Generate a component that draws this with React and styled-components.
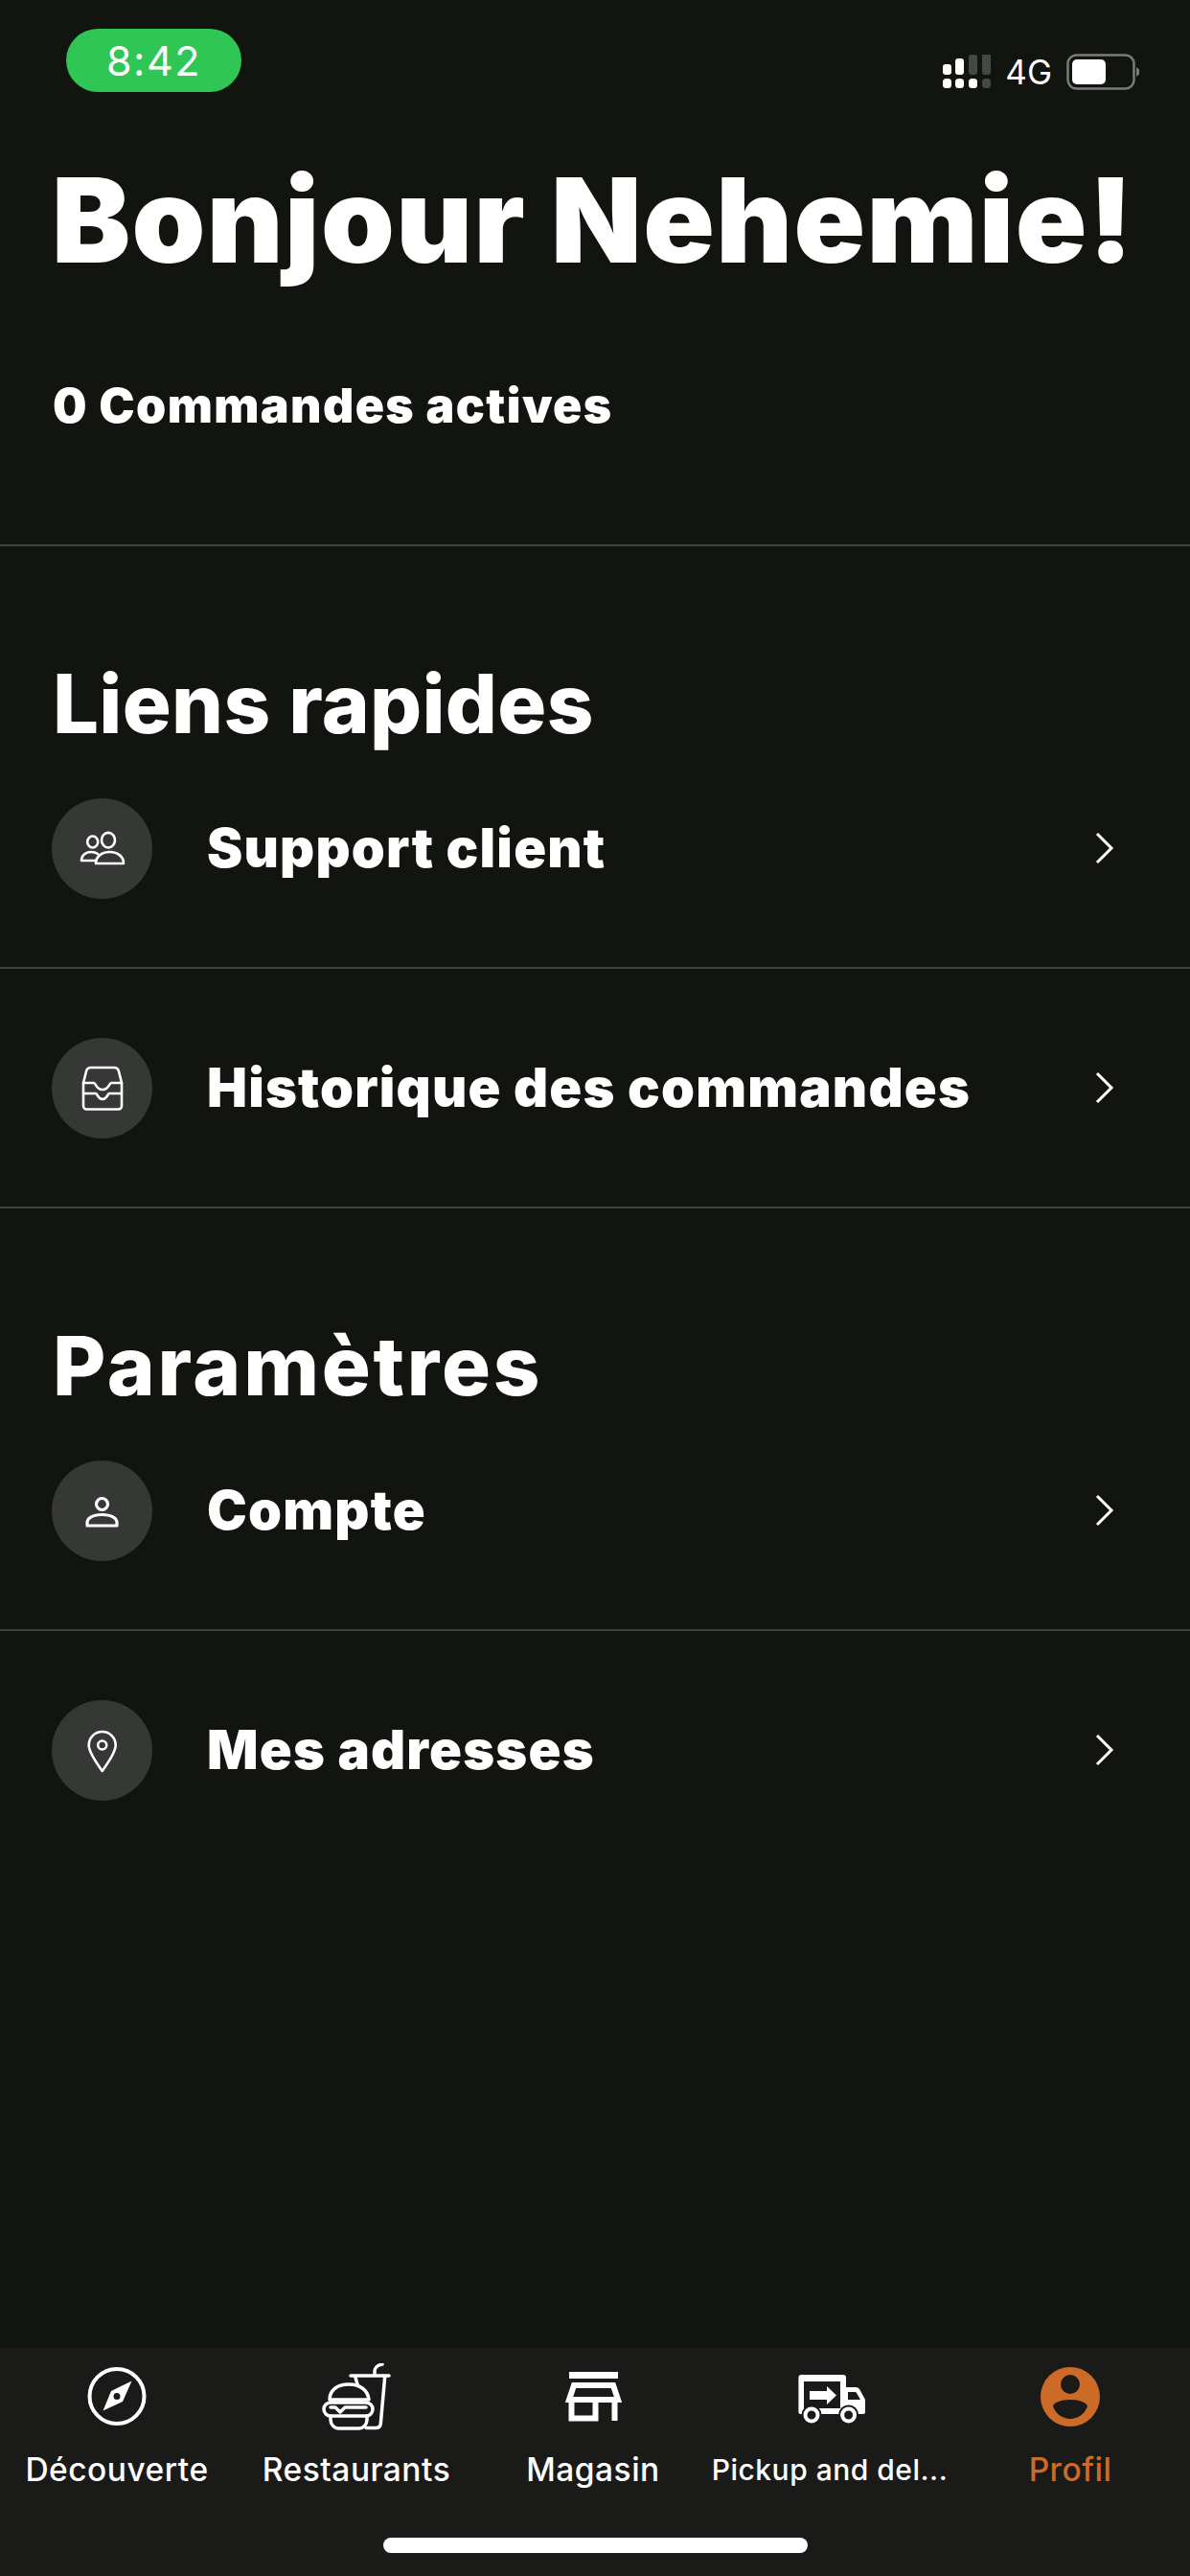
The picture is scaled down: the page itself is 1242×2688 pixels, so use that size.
import styled, { createGlobalStyle } from "styled-components";

const GlobalStyle = createGlobalStyle`
  html, body {
    margin: 0;
    padding: 0;
    background: #12140f;
  }
`;

const Page = styled.div`
  width: 1242px;
  height: 2688px;
  display: flex;
  flex-direction: column;
  background: #12140f;
  color: #fff;
  font-family: Inter, "Liberation Sans", sans-serif;
  overflow: hidden;
`;

const StatusBar = styled.div`
  height: 170px;
  padding: 30px 53px 0 69px;
  box-sizing: border-box;
  display: flex;
  justify-content: space-between;
  align-items: flex-start;
`;

const TimePill = styled.div`
  width: 183px;
  height: 66px;
  border-radius: 33px;
  background: #2fc655;
  display: flex;
  align-items: center;
  justify-content: center;
  font-size: 43px;
  letter-spacing: 1.5px;
  font-weight: 400;
`;

const StatusRight = styled.div`
  display: flex;
  align-items: center;
  gap: 15px;
  margin-top: 25px;
`;

const NetworkLabel = styled.span`
  font-size: 35px;
  line-height: 40px;
`;

const Greeting = styled.h1`
  margin: 0;
  padding-left: 54px;
  font-size: 123px;
  line-height: 120px;
  font-weight: 900;
  letter-spacing: 1.4px;
  white-space: nowrap;
`;

const ActiveOrders = styled.div`
  margin-top: 103px;
  padding-left: 55px;
  font-size: 50px;
  line-height: 60px;
  font-weight: 900;
  letter-spacing: 1.4px;
`;

const Divider = styled.div`
  height: 2px;
  background: #40423e;
  margin-top: ${({ $top }) => $top || 0}px;
`;

const SectionTitle = styled.h2`
  margin: 139px 0 0;
  padding-left: 55px;
  font-size: 85px;
  line-height: 52px;
  font-weight: 800;
  letter-spacing: ${({ $spacing }) => $spacing}px;
`;

const Row = styled.div`
  height: 248px;
  box-sizing: border-box;
  padding: 0 54px;
  display: flex;
  align-items: center;
  gap: 57px;
`;

const IconCircle = styled.div`
  width: 105px;
  height: 105px;
  border-radius: 50%;
  background: #363835;
  flex-shrink: 0;
`;

const RowLabel = styled.div`
  flex: 1;
  font-size: 56px;
  font-weight: 900;
  letter-spacing: 1.2px;
`;

const Chevron = styled.svg`
  width: 22px;
  height: 34px;
  margin-right: 24px;
`;

const BottomNav = styled.nav`
  margin-top: auto;
  height: 238px;
  background: #1a1b19;
  display: flex;
  flex-direction: column;
`;

const NavItems = styled.div`
  display: grid;
  grid-template-columns: 244px 256px 238px 256px 246px;
  padding-top: 16px;
`;

const NavItem = styled.div`
  display: flex;
  flex-direction: column;
  align-items: center;
  color: ${({ $active }) => ($active ? "#cc6a27" : "#fff")};
`;

const NavIcon = styled.svg`
  width: 80px;
  height: 76px;
`;

const NavLabel = styled.span`
  margin-top: 13px;
  font-size: ${({ $small }) => ($small ? 30 : 33.5)}px;
  line-height: 44px;
  font-weight: 500;
  letter-spacing: 0.5px;
  white-space: nowrap;
`;

const HomeIndicator = styled.div`
  width: 443px;
  height: 16px;
  border-radius: 8px;
  background: #fff;
  margin: auto auto 24px;
`;

const iconProps = { width: 105, height: 105, viewBox: "0 0 105 105", fill: "none", stroke: "#fff", strokeWidth: 2.6, strokeLinejoin: "round", strokeLinecap: "round" };

const PeopleIcon = () => (
  <svg {...iconProps}>
    <ellipse cx="42.7" cy="45.5" rx="5.5" ry="6" />
    <ellipse cx="59" cy="43.7" rx="7" ry="7.8" />
    <path d="M46 68c0-7 6-12 14.500-12S75 61 75 68z" />
    <path d="M45 65H31c0-5 4-9 10-9 3 0 5 .6 7 2" />
  </svg>
);

const DrawerIcon = () => (
  <svg {...iconProps}>
    <path d="M33 47l3-12c.6-2.600 2.500-4 5-4h24c2.500 0 4.400 1.400 5 4l3 12v24c0 2-1.500 3.500-3.500 3.500h-33C34.500 74.500 33 73 33 71z" />
    <path d="M33 47h11c2 0 2.500 7 9 7s7-7 9-7h11" />
    <path d="M33 58h13c1.500 0 2 6 7 6s5.500-6 7-6h13" />
  </svg>
);

const PersonIcon = () => (
  <svg {...iconProps} strokeWidth="3.2">
    <circle cx="52.500" cy="45.500" r="6" />
    <path d="M37 68v-3c0-5 6-8.500 15.500-8.500S68 60 68 65v3z" />
  </svg>
);

const PinIcon = () => (
  <svg {...iconProps}>
    <path d="M52.700 74c-2-3.500-14-18-14-27a14 14 0 0 1 28 0c0 9-12 23.500-14 27z" />
    <circle cx="52.700" cy="47" r="4.500" />
  </svg>
);

const SignalBars = () => (
  <svg width="50" height="36" viewBox="0 0 50 36">
    <g fill="#fff">
      <rect x="0" y="10" width="9" height="11" rx="3" />
      <rect x="13" y="4" width="9" height="17" rx="3" />
      <rect x="0" y="25" width="9" height="10" rx="3.500" />
      <rect x="13" y="25" width="9" height="10" rx="3.500" />
      <rect x="27" y="25" width="9" height="10" rx="3.500" />
    </g>
    <g fill="#464845">
      <rect x="27" y="0" width="9" height="21" rx="3" />
      <rect x="41" y="-4" width="9" height="25" rx="3" />
      <rect x="41" y="25" width="9" height="10" rx="3.500" />
    </g>
  </svg>
);

const Battery = () => (
  <svg width="76" height="38" viewBox="0 0 76 38">
    <rect x="1.500" y="1.500" width="69" height="35" rx="9" fill="none" stroke="#7a7c79" strokeWidth="2.500" />
    <rect x="6" y="6" width="35" height="26" rx="5" fill="#fff" />
    <path d="M73 14l3 2.500v5L73 24z" fill="#7a7c79" />
  </svg>
);

const ChevronRight = () => (
  <Chevron viewBox="0 0 22 34" fill="none" stroke="#fff" strokeWidth="3">
    <path d="M3 2l15 15L3 32" />
  </Chevron>
);

const CompassIcon = () => (
  <NavIcon viewBox="0 0 80 76">
    <circle cx="40" cy="34.500" r="28.500" fill="none" stroke="currentColor" strokeWidth="4" />
    <path fillRule="evenodd" fill="currentColor" d="M55.500 18.500L46 40 25.500 49.500 34 29zM40 31a3.500 3.500 0 1 0 0 7 3.500 3.500 0 0 0 0-7z" />
  </NavIcon>
);

const FoodIcon = () => (
  <NavIcon viewBox="0 0 80 76" fill="none" stroke="currentColor" strokeWidth="3.500" strokeLinecap="round" strokeLinejoin="round">
    <path d="M34 13H74M59 13V8c0-3 3-6 8-7M38.700 14l2.600 9M69.700 14L65.300 63c-.3 3-2 4.500-5 4.500H50" />
    <path d="M12 38C12 29 19 22 32 22s20 7 21 16z" />
    <path d="M13 41H50a7 7 0 0 1 0 14H13a7 7 0 0 1 0-14z" />
    <path d="M13 46h5l5 5 5-5h22" />
    <path d="M13 55v4c0 5 4 9 8 9h22c4 0 8-4 8-9v-4" />
  </NavIcon>
);

const StoreIcon = () => (
  <NavIcon viewBox="0 0 80 76" fill="none" stroke="currentColor" strokeWidth="6">
    <path d="M15 12.500h51" strokeWidth="7" />
    <path d="M20 23h41l5 15H15z" />
    <path d="M17.500 38v19.500h25V38M62.500 38v22" />
  </NavIcon>
);

const TruckIcon = () => (
  <NavIcon viewBox="0 0 80 76">
    <path fillRule="evenodd" fill="currentColor" d="M7.400 15a3 3 0 0 1 3-3H54a3 3 0 0 1 3 3v10h10c2 0 3 .8 4 2l5 9c.7 1 1 2 1 3v12a2 2 0 0 1-2 2H9.400a2 2 0 0 1-2-2V15zm5.600 4v28h38V19zm46 11v8h13l-4-7-1-1z" />
    <path fill="currentColor" d="M19 29h18v-5l10 9.500L37 43v-5H19z" />
    <circle cx="21" cy="54" r="10.500" fill="#1a1b19" />
    <circle cx="59.600" cy="54" r="10.500" fill="#1a1b19" />
    <circle cx="21" cy="54" r="6.500" fill="none" stroke="currentColor" strokeWidth="4" />
    <circle cx="59.600" cy="54" r="6.500" fill="none" stroke="currentColor" strokeWidth="4" />
  </NavIcon>
);

const ProfileIcon = () => (
  <NavIcon viewBox="0 0 80 76">
    <path fillRule="evenodd" fill="currentColor" d="M40 4a31 31 0 1 0 0 62 31 31 0 0 0 0-62zm0 8a10 10 0 1 1 0 20 10 10 0 0 1 0-20zm0 26c10 0 18 3.500 18 7-3 8-10 13-18 13s-15-5-18-13c0-3.500 8-7 18-7z" />
  </NavIcon>
);

const navItems = [
  { label: "Découverte", icon: <CompassIcon /> },
  { label: "Restaurants", icon: <FoodIcon /> },
  { label: "Magasin", icon: <StoreIcon /> },
  { label: "Pickup and del...", icon: <TruckIcon />, small: true },
  { label: "Profil", icon: <ProfileIcon />, active: true },
];

function LinkRow({ icon, label }) {
  return (
    <Row>
      <IconCircle>{icon}</IconCircle>
      <RowLabel>{label}</RowLabel>
      <ChevronRight />
    </Row>
  );
}

export default function App() {
  return (
    <Page>
      <GlobalStyle />
      <StatusBar>
        <TimePill>8:42</TimePill>
        <StatusRight>
          <SignalBars />
          <NetworkLabel>4G</NetworkLabel>
          <Battery />
        </StatusRight>
      </StatusBar>
      <Greeting>Bonjour Nehemie!</Greeting>
      <ActiveOrders>0 Commandes actives</ActiveOrders>
      <Divider $top={115} />
      <SectionTitle $spacing={0.3}>Liens rapides</SectionTitle>
      <LinkRow icon={<PeopleIcon />} label="Support client" />
      <Divider />
      <LinkRow icon={<DrawerIcon />} label="Historique des commandes" />
      <Divider />
      <SectionTitle $spacing={2.8}>Paramètres</SectionTitle>
      <LinkRow icon={<PersonIcon />} label="Compte" />
      <Divider />
      <LinkRow icon={<PinIcon />} label="Mes adresses" />
      <BottomNav>
        <NavItems>
          {navItems.map((item) => (
            <NavItem key={item.label} $active={item.active}>
              {item.icon}
              <NavLabel $small={item.small}>{item.label}</NavLabel>
            </NavItem>
          ))}
        </NavItems>
        <HomeIndicator />
      </BottomNav>
    </Page>
  );
}
